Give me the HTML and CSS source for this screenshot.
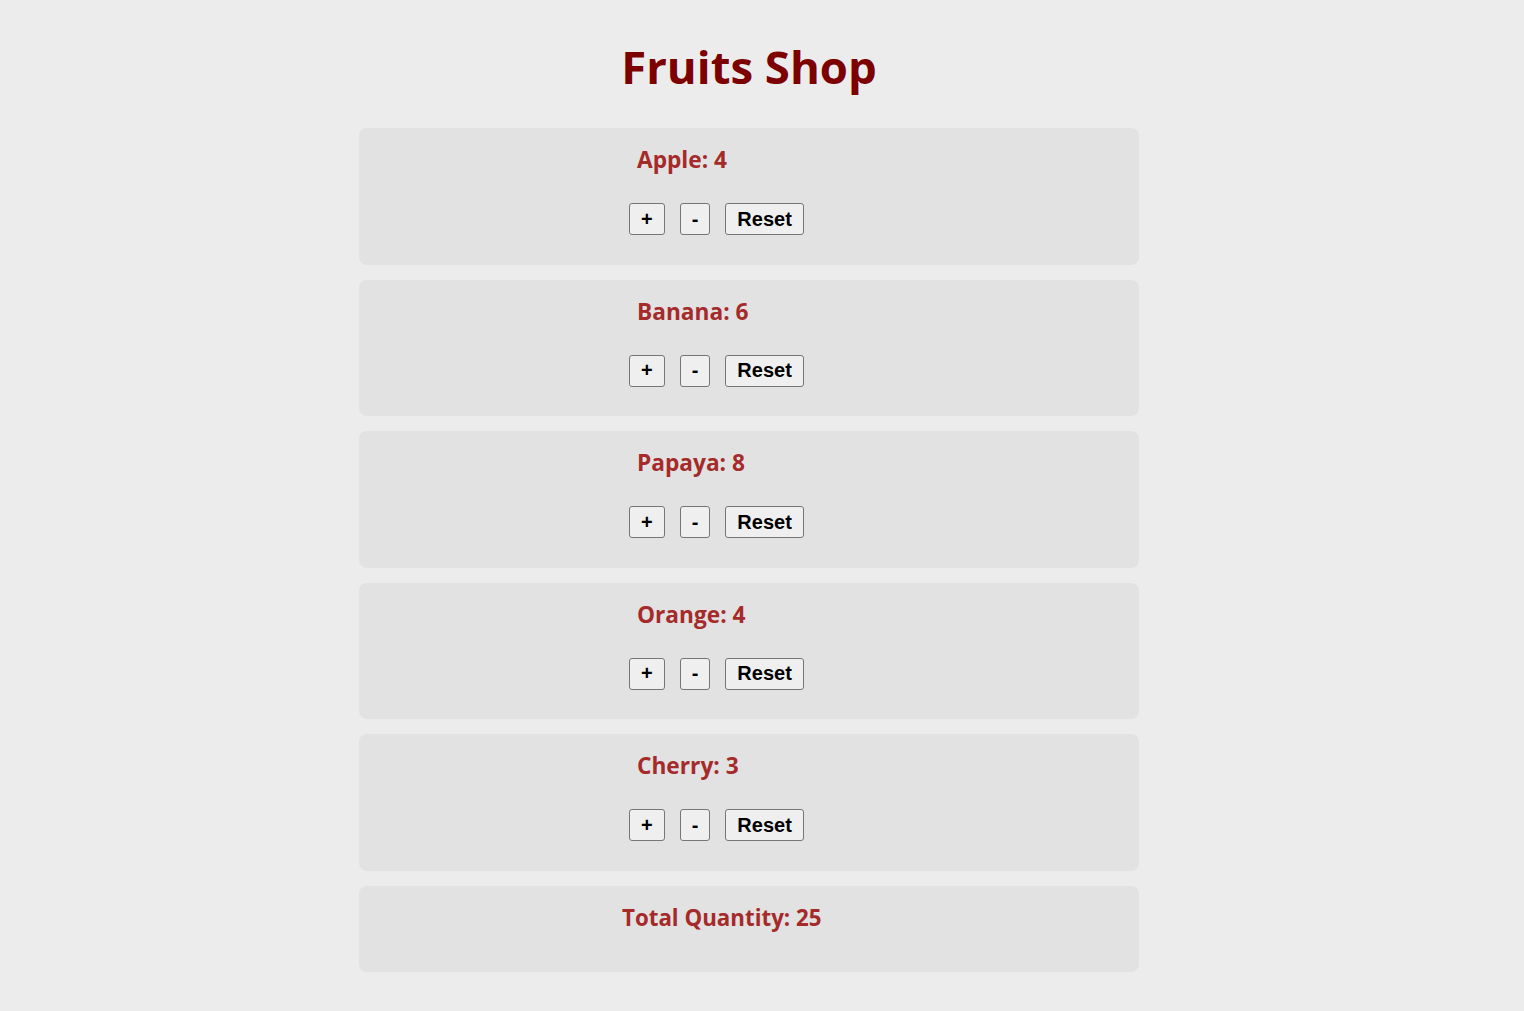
FILE: index.html
```html
<!DOCTYPE html>
<html lang="en">
<head>
<meta charset="utf-8">
<title>Fruits Shop</title>
<link rel="stylesheet" href="styles.css">
</head>
<body>
<div class="page">
  <h1 class="title">Fruits Shop</h1>
  <div class="list">
    <div class="card">
      <div class="label">Apple: 4</div>
      <div class="buttons"><button class="btn">+</button><button class="btn">-</button><button class="btn">Reset</button></div>
    </div>
    <div class="card">
      <div class="label">Banana: 6</div>
      <div class="buttons"><button class="btn">+</button><button class="btn">-</button><button class="btn">Reset</button></div>
    </div>
    <div class="card">
      <div class="label">Papaya: 8</div>
      <div class="buttons"><button class="btn">+</button><button class="btn">-</button><button class="btn">Reset</button></div>
    </div>
    <div class="card">
      <div class="label">Orange: 4</div>
      <div class="buttons"><button class="btn">+</button><button class="btn">-</button><button class="btn">Reset</button></div>
    </div>
    <div class="card">
      <div class="label">Cherry: 3</div>
      <div class="buttons"><button class="btn">+</button><button class="btn">-</button><button class="btn">Reset</button></div>
    </div>
    <div class="card total-card">
      <div class="label total">Total Quantity: 25</div>
    </div>
  </div>
</div>
</body>
</html>
```
FILE: styles.css
```css
html, body {
  margin: 0;
  padding: 0;
  background: #ececec;
}
body {
  font-family: "Open Sans", "Noto Sans", sans-serif;
}
.page {
  width: 1498px;
  display: flex;
  flex-direction: column;
  align-items: center;
}
.title {
  margin: 34px 0 30px;
  font-size: 45.5px;
  line-height: 64px;
  font-weight: 700;
  color: #7d0000;
}
.list {
  width: 780px;
  display: flex;
  flex-direction: column;
  gap: 15px;
}
.card {
  background: #e2e2e2;
  border-radius: 8px;
  padding: 16px 0 30px 270px;
  height: 136.6px;
  box-sizing: border-box;
}
.label {
  margin-left: 8px;
  font-size: 22.7px;
  line-height: 32px;
  font-weight: 700;
  color: #a52a2a;
}
.buttons {
  margin-top: 27px;
  display: flex;
  gap: 15px;
}
.btn {
  height: 32px;
  padding: 0 11px;
  font-family: "Liberation Sans", Arial, sans-serif;
  font-size: 20px;
  font-weight: 700;
  color: #000;
  background: #efefef;
  border: 1px solid #767676;
  border-radius: 3px;
}
.total-card {
  height: 86px;
  padding-left: 263px;
}
.total {
  margin-left: 0;
  font-size: 22.3px;
}
```
